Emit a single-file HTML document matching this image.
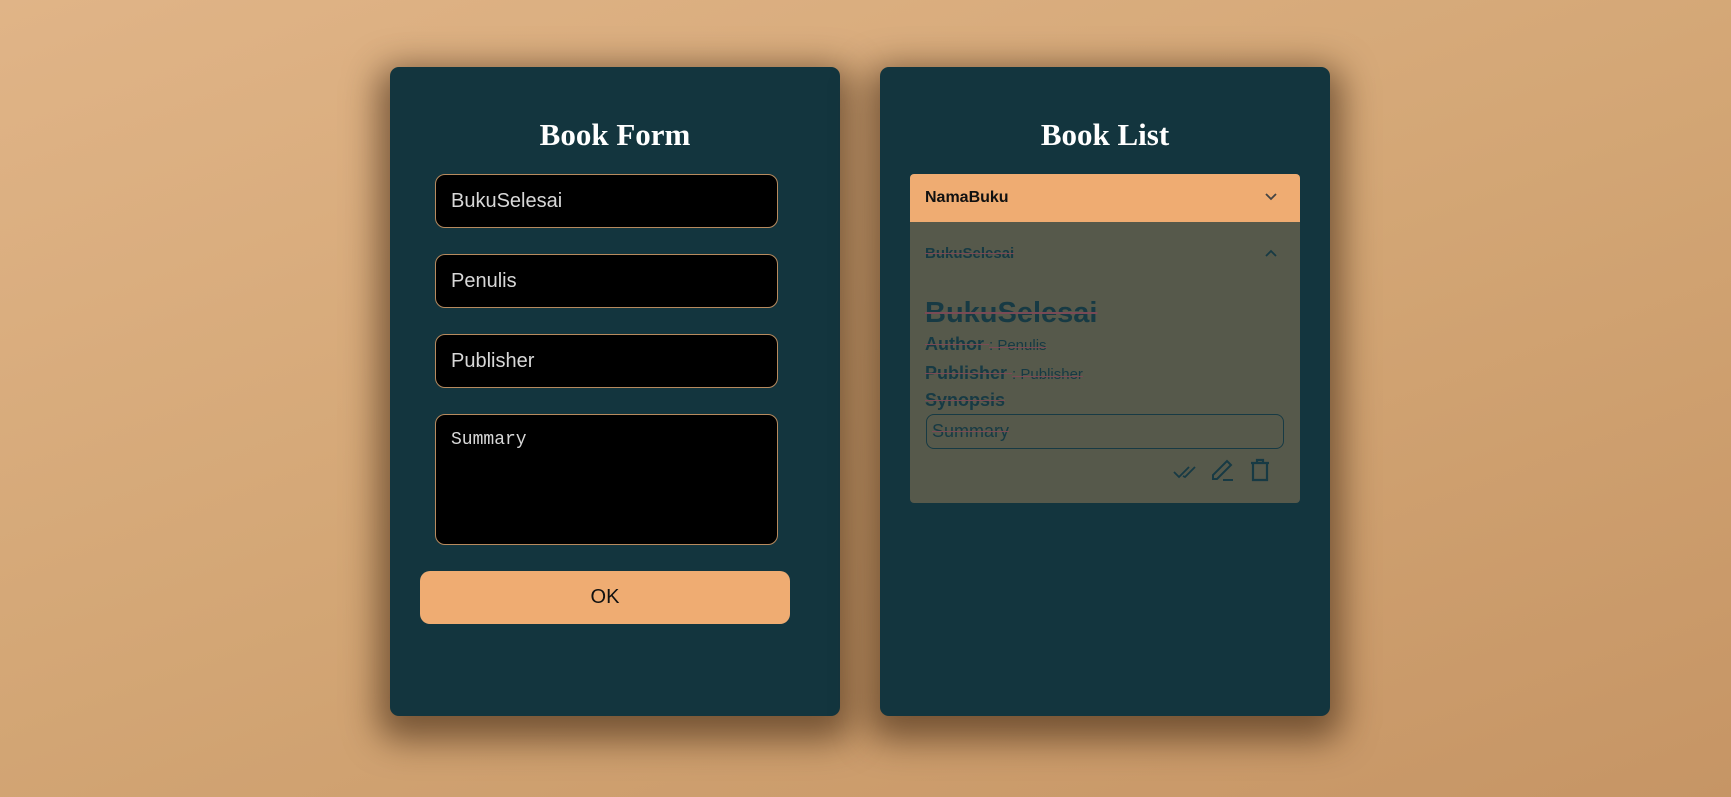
<!DOCTYPE html>
<html><head><style>
*{box-sizing:border-box;margin:0;padding:0}
body{width:1731px;height:797px;overflow:hidden;background:linear-gradient(160deg,#e0b487 0%,#d3a675 50%,#c69565 100%);font-family:"Liberation Sans",sans-serif;position:relative}
.panel{position:absolute;top:67px;width:450px;height:649px;background:#13353e;border-radius:9px;box-shadow:0 12px 34px 12px rgba(60,35,15,.6)}
h1{position:absolute;left:0;right:0;top:116px;text-align:center;font-family:"Liberation Serif",serif;font-weight:bold;font-size:31px;color:#fff}
.in{position:absolute;left:45px;width:343px;height:54px;background:#000;border:1px solid #b78a5e;border-radius:10px;color:#d8d8d8;font-size:20px;padding:15px 0 0 15px}
.ok{position:absolute;left:30px;top:504px;width:370px;height:53px;background:#efac72;border-radius:10px;text-align:center;font-size:20px;line-height:53px;color:#111}
.s{text-decoration:line-through;text-decoration-color:#7a4a55}
</style></head><body>
<div class="panel" style="left:390px">
<h1 style="top:50px">Book Form</h1>
<div class="in" style="top:107px">BukuSelesai</div>
<div class="in" style="top:187px">Penulis</div>
<div class="in" style="top:267px">Publisher</div>
<div class="in" style="top:347px;height:131px;font-family:'Liberation Mono',monospace;font-size:18px">Summary</div>
<div class="ok">OK</div>
</div>
<div class="panel" style="left:880px">
<h1 style="top:50px">Book List</h1>
<div style="position:absolute;left:30px;top:107px;width:390px;height:48px;background:#efac72;border-radius:4px 4px 0 0;font-size:16px;font-weight:bold;color:#111;padding:15px 0 0 15px">NamaBuku
<svg style="position:absolute;right:22px;top:18px" width="14" height="10" viewBox="0 0 14 10"><path d="M2 2l5 5 5-5" stroke="#444" stroke-width="1.8" fill="none"/></svg></div>
<div style="position:absolute;left:30px;top:155px;width:390px;height:281px;background:#56594b;border-radius:0 0 4px 4px;color:#173a44">
<div class="s" style="position:absolute;left:15px;top:23px;font-size:15px;font-weight:bold">BukuSelesai</div>
<svg style="position:absolute;right:22px;top:26px" width="14" height="10" viewBox="0 0 14 10"><path d="M2 8l5-5 5 5" stroke="#173a44" stroke-width="1.8" fill="none"/></svg>
<div class="s" style="position:absolute;left:15px;top:75px;font-size:29px;font-weight:bold">BukuSelesai</div>
<div class="s" style="position:absolute;left:15px;top:112px;font-size:18px"><b>Author</b> <span style="font-size:15px">: Penulis</span></div>
<div class="s" style="position:absolute;left:15px;top:141px;font-size:18px"><b>Publisher</b> <span style="font-size:15px">: Publisher</span></div>
<div class="s" style="position:absolute;left:15px;top:168px;font-size:18px;font-weight:bold">Synopsis</div>
<div style="position:absolute;left:16px;top:192px;width:358px;height:35px;border:1px solid #173a44;border-radius:8px;font-size:18px;padding:6px 0 0 5px"><span class="s">Summary</span></div>
<svg style="position:absolute;left:263px;top:240px" width="28" height="20" viewBox="0 0 28 20"><path d="M1 10l5 5 10-10M10 14l2 1 10-10" stroke="#173a44" stroke-width="1.8" fill="none"/></svg>
<svg style="position:absolute;left:300px;top:235px" width="26" height="26" viewBox="0 0 26 26"><path d="M3 22v-4L17 4l4 4L7 22zM13 23h10" stroke="#173a44" stroke-width="2" fill="none"/></svg>
<svg style="position:absolute;left:340px;top:235px" width="20" height="26" viewBox="0 0 20 26"><path d="M3 7v16h14V7M1 6h18M7 6V3h6v3" stroke="#173a44" stroke-width="2.2" fill="none"/></svg>
</div>
</div>
</body></html>
